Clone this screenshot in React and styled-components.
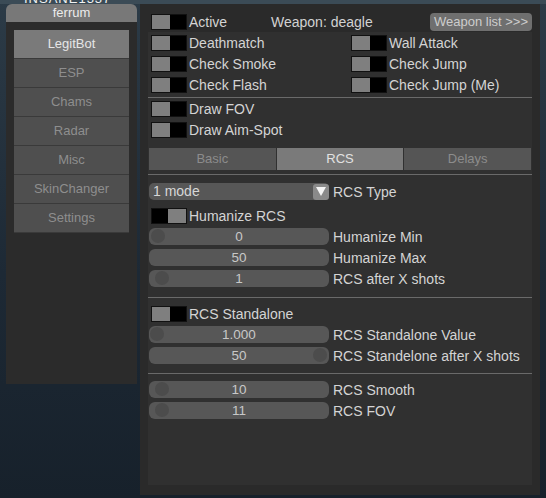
import React from "react";
import styled, { createGlobalStyle } from "styled-components";

const Global = createGlobalStyle`
  html, body {
    margin: 0;
    padding: 0;
    background: linear-gradient(180deg, #2c3b47 0%, #1d2935 55%, #17212b 100%);
    font-family: "Liberation Sans", Arial, sans-serif;
    overflow: hidden;
  }
`;

const Page = styled.div`
  width: 546px;
  height: 498px;
  display: flex;
  flex-direction: column;
`;

const HudStrip = styled.div`
  height: 4px;
  overflow: hidden;
  padding-left: 24px;
  background: #3b4b56;
  span {
    display: block;
    margin-top: -9px;
    color: #f2f2f2;
    font-size: 13px;
    letter-spacing: 1px;
  }
`;

const Row = styled.div`
  display: flex;
  align-items: flex-start;
  gap: 3px;
  padding-left: 6px;
`;

const Side = styled.div`
  width: 131px;
  display: flex;
  flex-direction: column;
`;

const SideHead = styled.div`
  height: 18px;
  background: #787878;
  border-radius: 6px 6px 0 0;
  color: #ececec;
  font-size: 13px;
  line-height: 18px;
  text-align: center;
`;

const SideBody = styled.div`
  height: 362px;
  box-sizing: border-box;
  background: #2b2b2b;
  padding: 8px;
  display: flex;
  flex-direction: column;
`;

const MenuItem = styled.div`
  height: 28px;
  line-height: 28px;
  text-align: center;
  font-size: 13px;
  background: ${(p) => (p.$active ? "#7a7a7a" : "#4f4f4f")};
  color: ${(p) => (p.$active ? "#e6e6e6" : "#8e8e8e")};
  border-bottom: 1px solid #3a3a3a;
`;

const Window = styled.div`
  width: 400px;
  height: 491px;
  box-sizing: border-box;
  background: #2a2a2a;
  padding: 7px 8px 10px 8px;
  display: flex;
  flex-direction: column;
`;

const Header = styled.div`
  height: 21px;
  display: flex;
  align-items: center;
  padding-left: 3px;
`;

const HeadGroup = styled.div`
  width: 120px;
  display: flex;
  align-items: center;
`;

const Weapon = styled.span`
  color: #d2d2d2;
  font-size: 14px;
`;

const ListButton = styled.div`
  margin-left: auto;
  height: 18px;
  width: 102px;
  border-radius: 4px;
  background: #6f6f6f;
  color: #cdcdcd;
  font-size: 13px;
  line-height: 18px;
  text-align: center;
`;

const Inner = styled.div`
  flex: 1;
  background: #303030;
  padding: 0 1px;
  display: flex;
  flex-direction: column;
`;

const Grid = styled.div`
  display: grid;
  grid-template-columns: 200px 1fr;
`;

const CheckRow = styled.div`
  height: 21px;
  display: flex;
  align-items: center;
  padding-left: 2px;
  margin-top: ${(p) => p.$mt || 0}px;
`;

const Toggle = styled.div`
  width: 36px;
  height: 16px;
  box-sizing: border-box;
  background: #000;
  border: 1px solid #111;
  display: flex;
  justify-content: ${(p) => (p.$on ? "flex-end" : "flex-start")};
  flex-shrink: 0;
  &::before {
    content: "";
    width: 18px;
    height: 14px;
    background: #7f7f7f;
  }
`;

const Label = styled.span`
  margin-left: 2px;
  color: #d4d4d4;
  font-size: 14px;
  white-space: nowrap;
`;

const Line = styled.div`
  height: 1px;
  margin: ${(p) => p.$mt}px -1px ${(p) => p.$mb}px;
  background: #6a6a6a;
`;

const Tabs = styled.div`
  margin-top: 8px;
  height: 22px;
  display: grid;
  grid-template-columns: repeat(3, 1fr);
  gap: 1px;
`;

const Tab = styled.div`
  background: ${(p) => (p.$active ? "#7a7a7a" : "#555555")};
  color: ${(p) => (p.$active ? "#e2e2e2" : "#8c8c8c")};
  font-size: 13px;
  line-height: 22px;
  text-align: center;
`;

const FieldRow = styled.div`
  height: 21px;
  display: flex;
  align-items: center;
  margin-top: ${(p) => p.$mt || 0}px;
`;

const Select = styled.div`
  width: 180px;
  height: 17px;
  box-sizing: border-box;
  border-radius: 5px;
  background: #575757;
  color: #d6d6d6;
  font-size: 14px;
  line-height: 17px;
  padding-left: 4px;
  display: flex;
  align-items: center;
  span {
    flex: 1;
  }
`;

const Arrow = styled.div`
  width: 16px;
  height: 16px;
  border-radius: 3px;
  background: #8a8a8a;
  display: flex;
  align-items: center;
  justify-content: center;
`;

const Slider = styled.div`
  position: relative;
  width: 180px;
  height: 17px;
  border-radius: 6px;
  background: #575757;
  color: #c8c8c8;
  font-size: 13.5px;
  line-height: 17px;
  text-align: center;
`;

const Knob = styled.div`
  position: absolute;
  top: 1px;
  left: ${(p) => p.$x}px;
  width: 14px;
  height: 14px;
  border-radius: 50%;
  background: #4c4c4c;
`;

const FieldLabel = styled(Label)`
  margin-left: 4px;
`;

function Check({ label, on, mt }) {
  return (
    <CheckRow $mt={mt}>
      <Toggle $on={on} />
      <Label>{label}</Label>
    </CheckRow>
  );
}

function Field({ value, label, knob }) {
  return (
    <FieldRow>
      <Slider>
        {knob !== undefined && <Knob $x={knob} />}
        {value}
      </Slider>
      <FieldLabel>{label}</FieldLabel>
    </FieldRow>
  );
}

const menu = ["LegitBot", "ESP", "Chams", "Radar", "Misc", "SkinChanger", "Settings"];

export default function App() {
  return (
    <>
      <Global />
      <Page>
        <HudStrip>
          <span>INSANE1337</span>
        </HudStrip>
        <Row>
          <Side>
            <SideHead>ferrum</SideHead>
            <SideBody>
              {menu.map((m, i) => (
                <MenuItem key={m} $active={i === 0}>
                  {m}
                </MenuItem>
              ))}
            </SideBody>
          </Side>

          <Window>
            <Header>
              <HeadGroup>
                <Toggle />
                <Label>Active</Label>
              </HeadGroup>
              <Weapon>Weapon: deagle</Weapon>
              <ListButton>Weapon list &gt;&gt;&gt;</ListButton>
            </Header>
            <Inner>
              <Grid>
                <Check label="Deathmatch" />
                <Check label="Wall Attack" />
                <Check label="Check Smoke" />
                <Check label="Check Jump" />
                <Check label="Check Flash" />
                <Check label="Check Jump (Me)" />
              </Grid>
              <Line $mt={2} $mb={0} />
              <Check label="Draw FOV" />
              <Check label="Draw Aim-Spot" />
              <Tabs>
                <Tab>Basic</Tab>
                <Tab $active>RCS</Tab>
                <Tab>Delays</Tab>
              </Tabs>
              <Line $mt={4} $mb={0} />
              <FieldRow $mt={6}>
                <Select>
                  <span>1 mode</span>
                  <Arrow>
                    <svg width="10" height="9" viewBox="0 0 10 9">
                      <path d="M0 0 H10 L5 9 Z" fill="#f4f4f4" />
                    </svg>
                  </Arrow>
                </Select>
                <FieldLabel>RCS Type</FieldLabel>
              </FieldRow>
              <Check label="Humanize RCS" on mt={3} />
              <Field value="0" label="Humanize Min" knob={2} />
              <Field value="50" label="Humanize Max" />
              <Field value="1" label="RCS after X shots" knob={6} />
              <Line $mt={8} $mb={5} />
              <Check label="RCS Standalone" />
              <Field value="1.000" label="RCS Standalone Value" knob={1} />
              <Field value="50" label="RCS Standelone after X shots" knob={164} />
              <Line $mt={7} $mb={5} />
              <Field value="10" label="RCS Smooth" knob={6} />
              <Field value="11" label="RCS FOV" knob={6} />
            </Inner>
          </Window>
        </Row>
      </Page>
    </>
  );
}
